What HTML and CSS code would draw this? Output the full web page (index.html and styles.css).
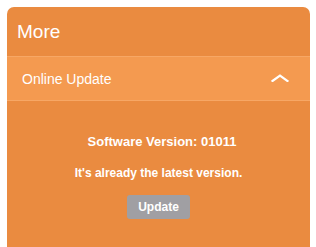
FILE: index.html
```html
<!DOCTYPE html>
<html>
<head>
<meta charset="utf-8">
<link rel="stylesheet" href="styles.css">
</head>
<body>
<div class="panel">
  <div class="panel-header">More</div>
  <div class="section-row">
    <span class="section-title">Online Update</span>
    <svg class="chevron" width="18" height="8" viewBox="0 0 18 8"><path d="M1.5 7 L9 1.5 L16.5 7" fill="none" stroke="#fff" stroke-width="2.2" stroke-linecap="square"/></svg>
  </div>
  <div class="section-body">
    <p class="info info-version">Software Version: 01011</p>
    <p class="info">It's already the latest version.</p>
    <button class="btn-update">Update</button>
  </div>
</div>
</body>
</html>
```
FILE: styles.css
```css
html, body {
  margin: 0;
  padding: 0;
  background: #fff;
}
body {
  padding: 7px 0 0 7px;
  font-family: "Liberation Sans", Arial, sans-serif;
}
.panel {
  width: 303px;
  height: 240px;
  background: #ea8b40;
  border-radius: 7px 7px 0 0;
  overflow: hidden;
  color: #fff;
}
.panel-header {
  height: 49px;
  box-sizing: border-box;
  padding: 14px 0 0 10px;
  font-size: 19px;
  line-height: 22px;
}
.section-row {
  height: 45px;
  box-sizing: border-box;
  background: #f49a50;
  border-top: 1px solid #f7a765;
  border-bottom: 1px solid #f7a765;
  display: flex;
  align-items: center;
  justify-content: space-between;
  padding: 0 21px 0 15px;
}
.section-title {
  font-size: 14px;
}
.chevron {
  display: block;
  margin-top: -1px;
}
.section-body {
  display: flex;
  flex-direction: column;
  align-items: center;
  padding-top: 34px;
}
.info {
  margin: 0;
  font-size: 12px;
  font-weight: bold;
  line-height: 14px;
}
.info-version {
  font-size: 13px;
  padding-left: 7px;
}
.info + .info {
  margin-top: 17px;
}
.btn-update {
  margin-top: 15px;
  width: 63px;
  height: 24px;
  border: none;
  border-radius: 3px;
  background: #a09fa3;
  color: #fff;
  font-family: "Liberation Sans", Arial, sans-serif;
  font-size: 12px;
  font-weight: bold;
  padding: 0;
}
```
